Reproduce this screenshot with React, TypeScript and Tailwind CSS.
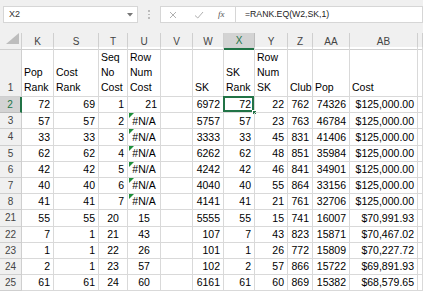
import React from "react";

const colLetters = ["K", "S", "T", "U", "V", "W", "X", "Y", "Z", "AA", "AB", ""];

type Align = "r" | "c" | "l";
type CellData = { v: string; a?: Align; tri?: boolean };

const alignClass: Record<Align, string> = {
  r: "justify-end pr-[3px]",
  c: "justify-center",
  l: "justify-start pl-[2px]",
};

const headerLabels = ["Pop\nRank", "Cost\nRank", "Seq\nNo\nCost", "Row\nNum\nCost", "", "SK", "SK\nRank", "Row\nNum\nSK", "Club", "Pop", "Cost", ""];

const rows: { n: string; cells: CellData[] }[] = [
  { n: "2", cells: [{ v: "72" }, { v: "69" }, { v: "1" }, { v: "21" }, { v: "" }, { v: "6972" }, { v: "72" }, { v: "22" }, { v: "762" }, { v: "74326" }, { v: "$125,000.00" }, { v: "" }] },
  { n: "3", cells: [{ v: "57" }, { v: "57" }, { v: "2" }, { v: "#N/A", a: "c", tri: true }, { v: "" }, { v: "5757" }, { v: "57" }, { v: "23" }, { v: "763" }, { v: "46784" }, { v: "$125,000.00" }, { v: "" }] },
  { n: "4", cells: [{ v: "33" }, { v: "33" }, { v: "3" }, { v: "#N/A", a: "c", tri: true }, { v: "" }, { v: "3333" }, { v: "33" }, { v: "45" }, { v: "831" }, { v: "41406" }, { v: "$125,000.00" }, { v: "" }] },
  { n: "5", cells: [{ v: "62" }, { v: "62" }, { v: "4" }, { v: "#N/A", a: "c", tri: true }, { v: "" }, { v: "6262" }, { v: "62" }, { v: "48" }, { v: "851" }, { v: "35984" }, { v: "$125,000.00" }, { v: "" }] },
  { n: "6", cells: [{ v: "42" }, { v: "42" }, { v: "5" }, { v: "#N/A", a: "c", tri: true }, { v: "" }, { v: "4242" }, { v: "42" }, { v: "46" }, { v: "841" }, { v: "34901" }, { v: "$125,000.00" }, { v: "" }] },
  { n: "7", cells: [{ v: "40" }, { v: "40" }, { v: "6" }, { v: "#N/A", a: "c", tri: true }, { v: "" }, { v: "4040" }, { v: "40" }, { v: "55" }, { v: "864" }, { v: "33156" }, { v: "$125,000.00" }, { v: "" }] },
  { n: "8", cells: [{ v: "41" }, { v: "41" }, { v: "7" }, { v: "#N/A", a: "c", tri: true }, { v: "" }, { v: "4141" }, { v: "41" }, { v: "21" }, { v: "761" }, { v: "32706" }, { v: "$125,000.00" }, { v: "" }] },
  { n: "21", cells: [{ v: "55" }, { v: "55" }, { v: "20", a: "c" }, { v: "15", a: "c" }, { v: "" }, { v: "5555" }, { v: "55" }, { v: "15" }, { v: "741" }, { v: "16007" }, { v: "$70,991.93" }, { v: "" }] },
  { n: "22", cells: [{ v: "7" }, { v: "1" }, { v: "21", a: "c" }, { v: "43", a: "c" }, { v: "" }, { v: "107" }, { v: "7" }, { v: "43" }, { v: "823" }, { v: "15871" }, { v: "$70,467.02" }, { v: "" }] },
  { n: "23", cells: [{ v: "1" }, { v: "1" }, { v: "22", a: "c" }, { v: "26", a: "c" }, { v: "" }, { v: "101" }, { v: "1" }, { v: "26" }, { v: "772" }, { v: "15809" }, { v: "$70,227.72" }, { v: "" }] },
  { n: "24", cells: [{ v: "2" }, { v: "1" }, { v: "23", a: "c" }, { v: "57", a: "c" }, { v: "" }, { v: "102" }, { v: "2" }, { v: "57" }, { v: "866" }, { v: "15722" }, { v: "$69,891.93" }, { v: "" }] },
  { n: "25", cells: [{ v: "61" }, { v: "61" }, { v: "24", a: "c" }, { v: "60", a: "c" }, { v: "" }, { v: "6161" }, { v: "61" }, { v: "60" }, { v: "869" }, { v: "15382" }, { v: "$68,579.65" }, { v: "" }] },
];

const gridCols =
  "grid grid-cols-[22px_32px_45px_29px_33px_32px_31px_31px_33px_25px_37px_68px_1fr]";

export default function App() {
  return (
    <div
      className="w-[423px] h-[297px] overflow-hidden bg-white text-black"
      style={{ fontFamily: '"Liberation Sans", Arial, sans-serif' }}
    >
      {/* formula bar */}
      <div className="h-[33px] bg-[#f0f0f0] flex items-start pt-[6px] pl-[3px]">
        <div className="w-[135px] h-[17px] bg-white border border-[#d6d6d6] flex items-center justify-between pl-[5px] pr-[4px]">
          <span className="text-[9px] text-[#333]">X2</span>
          <svg width="6" height="4" viewBox="0 0 6 4">
            <polygon points="0,0 6,0 3,3.5" fill="#777" />
          </svg>
        </div>
        <div className="w-[22px] h-[17px] flex flex-col items-center justify-center gap-[2px]">
          <span className="w-[1.5px] h-[1.5px] bg-[#bbb]" />
          <span className="w-[1.5px] h-[1.5px] bg-[#bbb]" />
          <span className="w-[1.5px] h-[1.5px] bg-[#bbb]" />
        </div>
        <div className="h-[17px] flex-1 bg-white border border-[#d6d6d6] flex items-center">
          <div className="w-[75px] h-full flex items-center border-r border-[#d6d6d6]">
            <svg width="8" height="8" viewBox="0 0 8 8" className="ml-[8px]">
              <path d="M1 1 L7 7 M7 1 L1 7" stroke="#b0b0b0" strokeWidth="1" />
            </svg>
            <svg width="10" height="8" viewBox="0 0 10 8" className="ml-[17px]">
              <path d="M1 4.5 L3.8 7 L9 1" stroke="#b0b0b0" strokeWidth="1" fill="none" />
            </svg>
            <span
              className="ml-[14px] text-[9px] italic text-[#555]"
              style={{ fontFamily: '"Liberation Serif", serif' }}
            >
              fx
            </span>
          </div>
          <span className="ml-[9px] text-[8.7px] text-[#222]">=RANK.EQ(W2,SK,1)</span>
        </div>
      </div>

      {/* column headers */}
      <div className={`${gridCols} h-[14px] bg-[#f0f0f0]`}>
        <div className="relative border-r border-b border-[#cfcfcf]">
          <svg width="16" height="12" viewBox="0 0 16 12" className="absolute left-[4px] top-[0px]">
            <polygon points="15,0 15,11 2,11" fill="#bdbdbd" />
          </svg>
        </div>
        {colLetters.map((c, i) => (
          <div
            key={i}
            className={
              c === "X"
                ? "flex items-center justify-center bg-[#d3d3d3] border-r border-[#bdbdbd] border-b-2 border-b-[#217346] text-[10px] text-[#217346]"
                : "flex items-center justify-center border-r border-b border-[#cfcfcf] text-[10px] text-[#444]"
            }
          >
            {c}
          </div>
        ))}
      </div>

      {/* row 1 */}
      <div className={`${gridCols} h-[50px]`}>
        <div className="flex items-end justify-center pb-[1px] bg-[#f0f0f0] border-r border-b border-[#cfcfcf] text-[10px] text-[#444] leading-[15px]">
          1
        </div>
        {headerLabels.map((h, i) => (
          <div
            key={i}
            className="flex items-end pl-[2px] pb-[1px] border-r border-b border-[#d9d9d9] text-[10.5px] leading-[15px] whitespace-pre-line"
          >
            {h}
          </div>
        ))}
      </div>

      {/* data rows */}
      {rows.map((r) => {
        const sel = r.n === "2";
        return (
          <div key={r.n} className={`${gridCols} h-[16.2px]`}>
            <div
              className={
                sel
                  ? "flex items-center justify-center bg-[#d3d3d3] border-b border-[#bdbdbd] border-r-2 border-r-[#217346] text-[10px] text-[#217346]"
                  : "flex items-center justify-center bg-[#f0f0f0] border-r border-b border-[#cfcfcf] text-[10px] text-[#444]"
              }
            >
              {r.n}
            </div>
            {r.cells.map((c, i) => {
              const isSel = sel && i === 6;
              return (
                <div
                  key={i}
                  className={`relative flex items-center ${alignClass[c.a ?? "r"]} border-r border-b border-[#d9d9d9] text-[10.5px] leading-none`}
                >
                  {c.tri && (
                    <svg width="5" height="5" viewBox="0 0 5 5" className="absolute left-[1px] top-[0px]">
                      <polygon points="0,0 5,0 0,5" fill="#1e8f3a" />
                    </svg>
                  )}
                  {c.v}
                  {isSel && (
                    <>
                      <div className="absolute -left-[1px] -top-[1px] -right-[0px] -bottom-[0px] border-2 border-[#217346] pointer-events-none" />
                      <div className="absolute -right-[3px] -bottom-[3px] w-[5px] h-[5px] bg-[#217346] border border-white" />
                    </>
                  )}
                </div>
              );
            })}
          </div>
        );
      })}
    </div>
  );
}
